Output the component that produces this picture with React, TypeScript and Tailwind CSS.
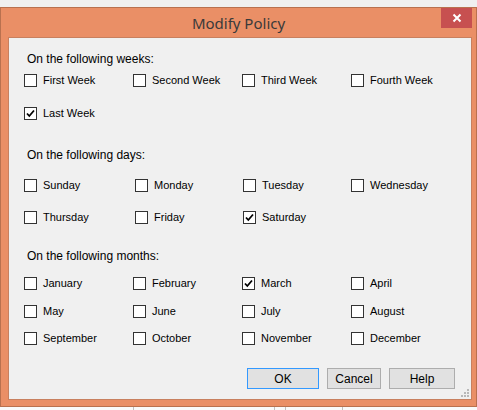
import React from 'react';

const FONT = { fontFamily: '"Liberation Sans", Arial, sans-serif' };

type Item = { label: string; checked?: boolean };

const WEEKS: Item[][] = [
    [{ label: 'First Week' }, { label: 'Second Week' }, { label: 'Third Week' }, { label: 'Fourth Week' }],
    [{ label: 'Last Week', checked: true }],
];

const DAYS: Item[][] = [
    [{ label: 'Sunday' }, { label: 'Monday' }, { label: 'Tuesday' }, { label: 'Wednesday' }],
    [{ label: 'Thursday' }, { label: 'Friday' }, { label: 'Saturday', checked: true }],
];

const MONTHS: Item[][] = [
    [{ label: 'January' }, { label: 'February' }, { label: 'March', checked: true }, { label: 'April' }],
    [{ label: 'May' }, { label: 'June' }, { label: 'July' }, { label: 'August' }],
    [{ label: 'September' }, { label: 'October' }, { label: 'November' }, { label: 'December' }],
];

const Check: React.FC<Item> = ({ label, checked }) => (
    <div className="flex items-center">
        <div className="w-[13px] h-[13px] border border-[#333333] bg-white flex items-center justify-center shrink-0">
            {checked && (
                <svg width="9" height="9" viewBox="0 0 9 9">
                    <path d="M1 4.5 L3.3 7 L8 1.5" stroke="#000" strokeWidth="1.8" fill="none" />
                </svg>
            )}
        </div>
        <span className="ml-[6px] text-[11px] leading-[14px] text-black whitespace-nowrap">{label}</span>
    </div>
);

// one row of checkboxes; widths are the column steps of the dialog
const Row: React.FC<{ items: Item[]; cols: string[]; className: string }> = ({ items, cols, className }) => (
    <div className={`flex items-center h-[20px] ${className}`}>
        {items.map((it, i) => (
            <div key={it.label} className={cols[i]}>
                <Check {...it} />
            </div>
        ))}
    </div>
);

const Heading: React.FC<{ text: string; className: string }> = ({ text, className }) => (
    <div className={`h-[14px] ml-[3px] text-[12px] leading-[14px] text-black ${className}`}>{text}</div>
);

const WIDE = ['w-[109px]', 'w-[109px]', 'w-[109px]', 'w-[100px]'];
const DAY_COLS = ['w-[111px]', 'w-[108px]', 'w-[108px]', 'w-[100px]'];

export default function App() {
    return (
        <div className="w-[477px] h-[410px] bg-[#f0f0f0] overflow-hidden relative" style={FONT}>
            <div className="h-[7px]" />
            {/* window frame */}
            <div className="h-[400px] border border-[#b9714f] bg-[#ea8f66] flex flex-col">
                <div className="h-[29px] flex relative">
                    <div className="flex-1 flex items-center justify-center pt-[2px] text-[15px] text-[#3a3a3a]" style={{ fontFamily: '"Noto Sans", sans-serif' }}>
                        Modify Policy
                    </div>
                    <div className="absolute left-[440px] top-0 w-[31px] h-[20px] bg-[#c75050] flex items-center justify-center">
                        <svg width="10" height="10" viewBox="0 0 10 10">
                            <path d="M1.5 1.5 L8.5 8.5 M8.5 1.5 L1.5 8.5" stroke="#fff" strokeWidth="2" />
                        </svg>
                    </div>
                </div>
                {/* client area */}
                <div className="ml-[7px] w-[464px] h-[363px] border border-[#c8805f] bg-[#f0f0f0] flex flex-col pl-[15px] relative">
                    <Heading text="On the following weeks:" className="mt-[14px]" />
                    <Row items={WEEKS[0]} cols={WIDE} className="mt-[4px]" />
                    <Row items={WEEKS[1]} cols={WIDE} className="mt-[13px]" />

                    <Heading text="On the following days:" className="mt-[25px]" />
                    <Row items={DAYS[0]} cols={DAY_COLS} className="mt-[13px]" />
                    <Row items={DAYS[1]} cols={DAY_COLS} className="mt-[12px]" />

                    <Heading text="On the following months:" className="mt-[22px]" />
                    <Row items={MONTHS[0]} cols={WIDE} className="mt-[10px]" />
                    <Row items={MONTHS[1]} cols={WIDE} className="mt-[8px]" />
                    <Row items={MONTHS[2]} cols={WIDE} className="mt-[7px]" />

                    <div className="mt-[20px] flex justify-end pr-[16px] gap-[8px]">
                        <button className="w-[72px] h-[21px] border border-[#3399ff] bg-[#e1e1e1] text-[12px] text-black">OK</button>
                        <button className="w-[54px] h-[21px] border border-[#adadad] bg-[#e1e1e1] text-[12px] text-black">Cancel</button>
                        <button className="w-[66px] h-[21px] border border-[#adadad] bg-[#e1e1e1] text-[12px] text-black">Help</button>
                    </div>

                    {/* size grip */}
                    <svg className="absolute right-[1px] bottom-[1px]" width="10" height="10" viewBox="0 0 10 10">
                        <rect x="7" y="1" width="2" height="2" fill="#b8b8b8" />
                        <rect x="4" y="4" width="2" height="2" fill="#b8b8b8" />
                        <rect x="7" y="4" width="2" height="2" fill="#b8b8b8" />
                        <rect x="1" y="7" width="2" height="2" fill="#b8b8b8" />
                        <rect x="4" y="7" width="2" height="2" fill="#b8b8b8" />
                        <rect x="7" y="7" width="2" height="2" fill="#b8b8b8" />
                    </svg>
                </div>
            </div>
            {/* window behind, peeking out at the bottom */}
            <div className="h-[3px] bg-[#fafafa] flex">
                <div className="ml-[133px] w-px bg-[#c0c0c0]" />
                <div className="ml-[140px] w-px bg-[#c0c0c0]" />
                <div className="ml-[10px] w-px bg-[#c0c0c0]" />
                <div className="ml-[56px] w-px bg-[#c0c0c0]" />
            </div>
        </div>
    );
}
